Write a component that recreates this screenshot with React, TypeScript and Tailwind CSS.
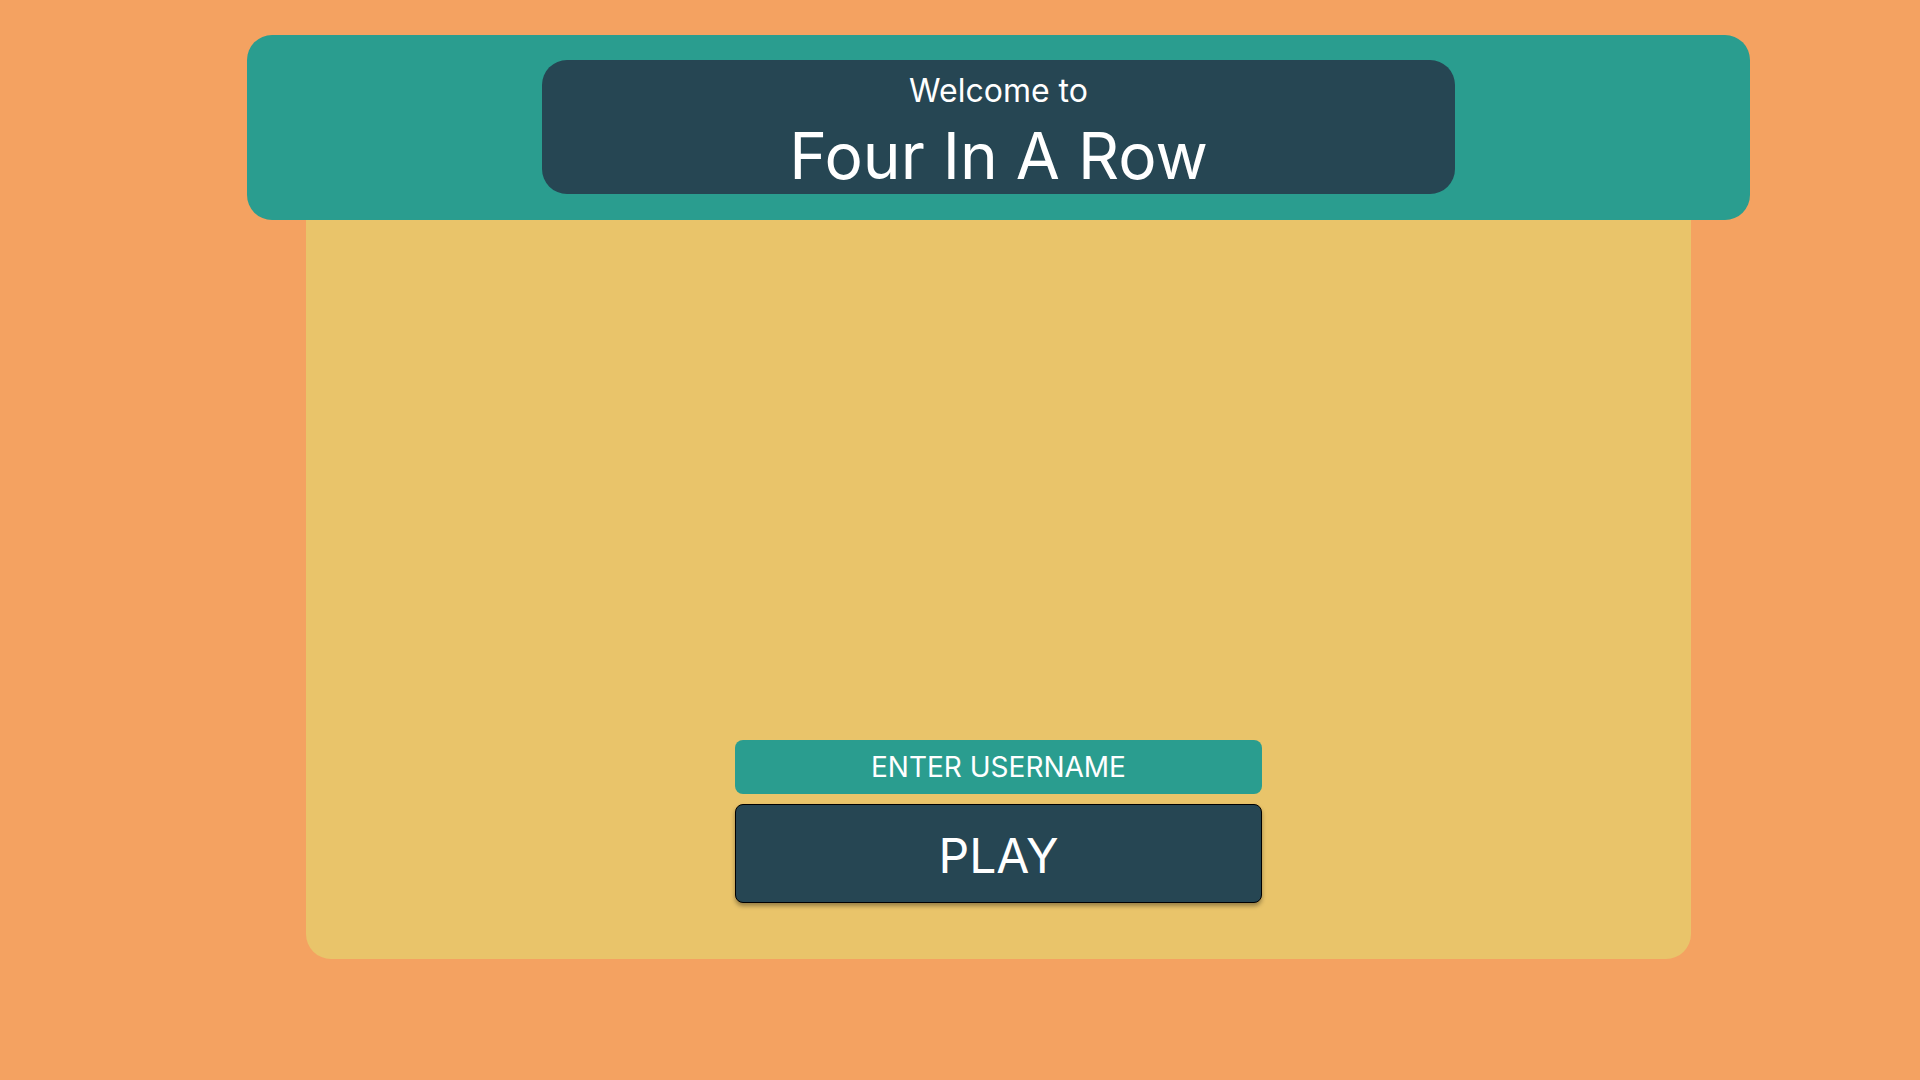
import React from "react";

export default function App() {
  return (
    <div
      className="min-h-screen w-full bg-[#f4a261] overflow-hidden"
      style={{ fontFamily: "Inter, 'Noto Sans', sans-serif" }}
    >
      <div className="flex flex-col ml-[247px] pt-[35px] w-[1503px]">
        <header className="relative z-10 h-[185px] w-[1503px] rounded-[25px] bg-[#2a9d8f] flex justify-center pt-[25px]">
          <div className="w-[913px] h-[134px] rounded-[25px] bg-[#264653] flex flex-col items-center pt-[15px] text-white">
            <div className="text-[32px] leading-none">Welcome to</div>
            <div className="text-[64px] leading-none mt-[17px]">Four In A Row</div>
          </div>
        </header>
        <main className="ml-[59px] w-[1385px] h-[739px] bg-[#e9c46a] rounded-b-[25px] flex flex-col items-center justify-end pb-[56px] gap-[10px]">
          <div className="w-[527px] h-[54px] rounded-[8px] bg-[#2a9d8f] flex items-center justify-center text-white text-[28px] leading-none">
            ENTER USERNAME
          </div>
          <button className="w-[527px] h-[99px] rounded-[8px] bg-[#264653] border border-black shadow-[0_3px_4px_rgba(0,0,0,0.35)] flex items-center justify-center text-white text-[48px] leading-none pt-[4px]">
            PLAY
          </button>
        </main>
      </div>
    </div>
  );
}
